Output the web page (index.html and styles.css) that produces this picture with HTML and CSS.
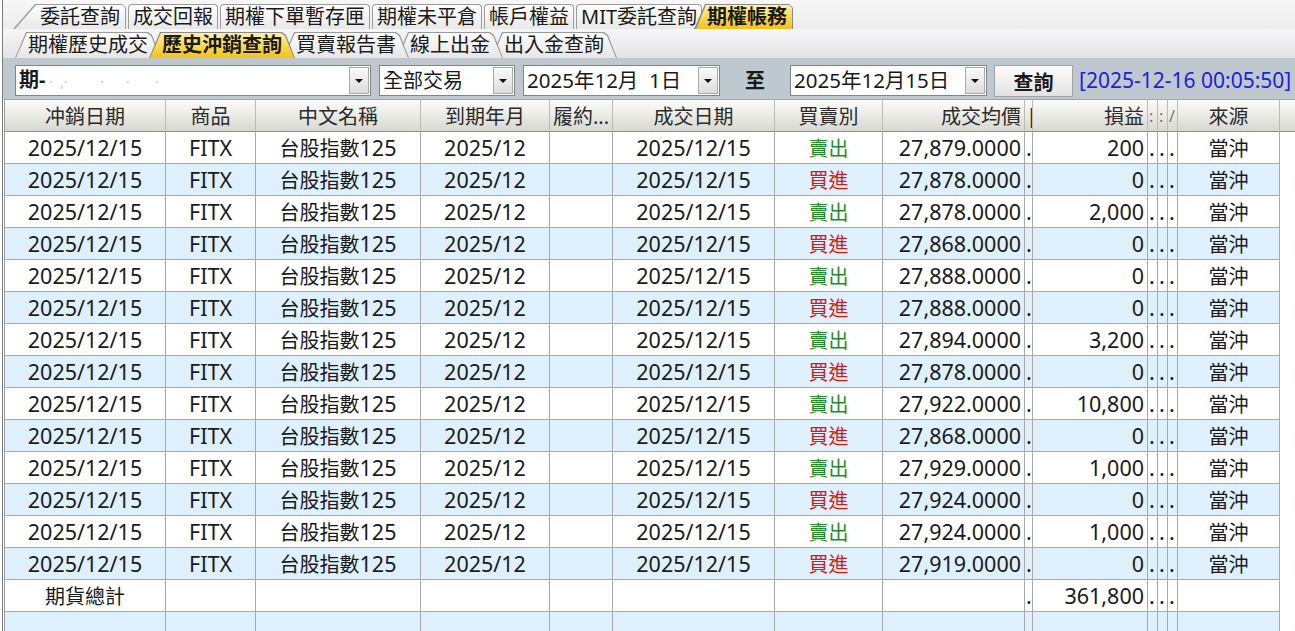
FILE: index.html
```html
<!DOCTYPE html>
<html lang="zh-Hant">
<head>
    <meta charset="UTF-8">
    <title>期權帳務 - 歷史沖銷查詢</title>
    <link rel="stylesheet" href="styles.css">
</head>
<body>
<div class="app">
    <!-- main tabs -->
    <div class="tabs-main">
        <div class="tab tab-slant tab-first">委託查詢</div>
        <div class="tab">成交回報</div>
        <div class="tab">期權下單暫存匣</div>
        <div class="tab">期權未平倉</div>
        <div class="tab">帳戶權益</div>
        <div class="tab tab-mit">MIT委託查詢</div>
        <div class="tab tab-slant tab-active">期權帳務</div>
    </div>

    <!-- sub tabs -->
    <div class="tabs-sub">
        <div class="trap z5">期權歷史成交</div>
        <div class="trap trap-active">歷史沖銷查詢</div>
        <div class="trap z4">買賣報告書</div>
        <div class="trap z3">線上出金</div>
        <div class="trap z2">出入金查詢</div>
    </div>

    <!-- query bar -->
    <div class="toolbar">
        <div class="combo combo-account">
            <span class="combo-text"><b>期-</b><span class="masked"> ·  ,·         ·      ·       ·</span></span>
            <span class="combo-btn"></span>
        </div>
        <div class="combo combo-type">
            <span class="combo-text">全部交易</span>
            <span class="combo-btn"></span>
        </div>
        <div class="combo combo-date">
            <span class="combo-text">2025年12月  1日</span>
            <span class="combo-btn"></span>
        </div>
        <div class="to-label">至</div>
        <div class="combo combo-date">
            <span class="combo-text">2025年12月15日</span>
            <span class="combo-btn"></span>
        </div>
        <button class="btn-query">查詢</button>
        <div class="stamp">[2025-12-16 00:05:50]</div>
    </div>

    <!-- result grid -->
    <div class="grid">
        <table>
            <colgroup>
                <col class="w-date">
                <col class="w-prod">
                <col class="w-name">
                <col class="w-month">
                <col class="w-strike">
                <col class="w-date2">
                <col class="w-side">
                <col class="w-price">
                <col class="w-thin8">
                <col class="w-pl">
                <col class="w-thin">
                <col class="w-thin">
                <col class="w-thin">
                <col class="w-src">
                <col>
            </colgroup>
            <thead>
                <tr>
                    <th>冲銷日期</th>
                    <th>商品</th>
                    <th>中文名稱</th>
                    <th>到期年月</th>
                    <th class="left">履約...</th>
                    <th>成交日期</th>
                    <th>買賣別</th>
                    <th class="right">成交均價</th>
                    <th class="thin">|</th>
                    <th class="right">損益</th>
                    <th class="thin dim">:</th>
                    <th class="thin dim">:</th>
                    <th class="thin dim">/</th>
                    <th>來源</th>
                    <th class="fill"></th>
                </tr>
            </thead>
            <tbody id="rows"></tbody>
        </table>
    </div>
</div>

<script>
    const trades = [
        ['賣出', '27,879.0000', '200'],
        ['買進', '27,878.0000', '0'],
        ['賣出', '27,878.0000', '2,000'],
        ['買進', '27,868.0000', '0'],
        ['賣出', '27,888.0000', '0'],
        ['買進', '27,888.0000', '0'],
        ['賣出', '27,894.0000', '3,200'],
        ['買進', '27,878.0000', '0'],
        ['賣出', '27,922.0000', '10,800'],
        ['買進', '27,868.0000', '0'],
        ['賣出', '27,929.0000', '1,000'],
        ['買進', '27,924.0000', '0'],
        ['賣出', '27,924.0000', '1,000'],
        ['買進', '27,919.0000', '0']
    ];

    const body = document.getElementById('rows');
    let html = '';

    trades.forEach(([side, price, pl], i) => {
        const cls = side === '賣出' ? 'sell' : 'buy';
        html += `<tr class="${i % 2 ? 'alt' : ''}">
            <td>2025/12/15</td>
            <td>FITX</td>
            <td><span class="zh">台股指數</span>125</td>
            <td>2025/12</td>
            <td></td>
            <td>2025/12/15</td>
            <td class="zh ${cls}">${side}</td>
            <td class="right">${price}</td>
            <td class="thin">.</td>
            <td class="right">${pl}</td>
            <td class="thin">.</td>
            <td class="thin">.</td>
            <td class="thin">.</td>
            <td class="zh">當沖</td>
            <td class="fill"></td>
        </tr>`;
    });

    // totals
    html += `<tr>
        <td class="zh">期貨總計</td><td></td><td></td><td></td><td></td><td></td><td></td><td></td>
        <td class="thin">.</td>
        <td class="right">361,800</td>
        <td class="thin">.</td><td class="thin">.</td><td class="thin">.</td>
        <td></td><td class="fill"></td>
    </tr>`;
    html += `<tr class="alt partial">
        <td class="zh">總計</td><td></td><td></td><td></td><td></td><td></td><td></td><td></td>
        <td class="thin"></td><td></td><td class="thin"></td><td class="thin"></td><td class="thin"></td>
        <td></td><td class="fill"></td>
    </tr>`;

    body.innerHTML = html;
</script>
</body>
</html>
```

FILE: styles.css
```css
/* --- Base --- */
* {
    box-sizing: border-box;
    margin: 0;
    padding: 0;
}

body {
    font-family: "Noto Sans", "Noto Sans CJK TC", sans-serif;
    color: #1a1a1a;
    background: #ffffff;
    width: 1295px;
    height: 631px;
    overflow: hidden;
}

.app {
    margin-left: 2px;
    border-left: 1px solid #7b7b7b;
    height: 631px;
    overflow: hidden;
}

/* --- Main tabs --- */
.tabs-main {
    height: 29px;
    display: flex;
    align-items: flex-end;
    padding-left: 10px;
    background: linear-gradient(#f7f7f7, #ededed);
}

.tab {
    position: relative;
    z-index: 0;
    height: 25px;
    line-height: 23px;
    font-size: 20px;
    padding: 0 4px;
    margin-right: 2px;
    border: 1px solid #9c9c9c;
    border-bottom: none;
    border-radius: 4px 4px 0 0;
    background: linear-gradient(#fefefe, #e8e8e8);
    white-space: nowrap;
}

.tab-slant {
    border: none;
    background: none;
}

.tab-slant::before,
.tab-slant::after {
    content: "";
    position: absolute;
    z-index: -1;
}

.tab-slant::before {
    inset: 0;
    background: #9c9c9c;
    clip-path: polygon(0 100%, 22px 0, calc(100% - 4px) 0, 100% 4px, 100% 100%);
}

.tab-slant::after {
    inset: 1px 1px 0 2px;
    background: linear-gradient(#fefefe, #e8e8e8);
    clip-path: polygon(0 100%, 21px 0, calc(100% - 3px) 0, 100% 3px, 100% 100%);
}

.tab-first {
    padding: 1px 6px 0 27px;
}

.tab-mit {
    margin-right: 0;
}

.tab-active {
    z-index: 5;
    margin-left: -8px;
    padding: 1px 6px 0 13px;
    font-weight: 700;
}

.tab-active::before {
    background: #8a8a8a;
    clip-path: polygon(0 100%, 11px 0, calc(100% - 4px) 0, 100% 4px, 100% 100%);
}

.tab-active::after {
    background: linear-gradient(#fff1a6, #fbd84a 55%, #f3c11a);
    clip-path: polygon(0 100%, 10px 0, calc(100% - 3px) 0, 100% 3px, 100% 100%);
}

/* --- Sub tabs --- */
.tabs-sub {
    height: 29px;
    display: flex;
    align-items: flex-end;
    padding-left: 12px;
    background: linear-gradient(#f6f6f8, #e3e3e7);
}

.trap {
    position: relative;
    z-index: 1;
    height: 26px;
    line-height: 25px;
    font-size: 20px;
    padding: 0 13px;
    margin-left: -12px;
    white-space: nowrap;
    isolation: isolate;
}

.trap:first-child {
    margin-left: 0;
}

.trap::before,
.trap::after {
    content: "";
    position: absolute;
    z-index: -1;
}

.trap::before {
    inset: 0;
    background: #9a9a9a;
    clip-path: polygon(0 100%, 11px 0, calc(100% - 13px) 0, calc(100% - 9px) 3px, 100% 100%);
}

.trap::after {
    inset: 1px 1px 0 1px;
    background: linear-gradient(#fcfcfc, #e6e6e6);
    clip-path: polygon(0 100%, 11px 0, calc(100% - 13px) 0, calc(100% - 9px) 3px, 100% 100%);
}

.trap-active {
    z-index: 10;
    font-weight: 700;
}

.trap-active::before {
    background: #8a8a8a;
}

.trap-active::after {
    background: linear-gradient(#fff1a6, #fbd84a 55%, #f3c11a);
}

.z5 { z-index: 5; }
.z4 { z-index: 4; }
.z3 { z-index: 3; }
.z2 { z-index: 2; }

/* --- Toolbar --- */
.toolbar {
    height: 41px;
    display: flex;
    align-items: flex-start;
    padding: 7px 0 0 12px;
    background: #bfc7cf;
}

.combo {
    height: 31px;
    display: flex;
    align-items: center;
    border: 1px solid #7e858d;
    background: #ffffff;
    font-size: 20px;
    margin-right: 8px;
}

.combo-account { width: 356px; }
.combo-type { width: 136px; }
.combo-date { width: 197px; margin-right: 0; font-size: 20.5px; }

.combo-text {
    flex: 1;
    padding-left: 3px;
    white-space: pre;
    overflow: hidden;
    line-height: 29px;
}

.masked {
    color: #c8c8c8;
    font-size: 14px;
}

.combo-btn {
    width: 20px;
    height: 27px;
    margin-right: 1px;
    border: 1px solid #ababab;
    background: linear-gradient(#fafafa, #dddddd);
    display: flex;
    align-items: center;
    justify-content: center;
}

.combo-btn::after {
    content: "";
    border-left: 4px solid transparent;
    border-right: 4px solid transparent;
    border-top: 4px solid #111111;
}

.to-label {
    width: 70px;
    text-align: center;
    font-size: 20px;
    font-weight: 700;
    line-height: 31px;
}

.btn-query {
    width: 79px;
    height: 32px;
    margin-left: 7px;
    font-family: inherit;
    font-size: 20px;
    font-weight: 700;
    color: #1a1a1a;
    border: 1px solid #a3a3a3;
    background: linear-gradient(#fcfcfc, #e2e2e2);
}

.stamp {
    margin-left: 6px;
    font-size: 21px;
    line-height: 31px;
    color: #1a22d8;
    white-space: nowrap;
}

/* --- Grid --- */
.grid {
    background: #ffffff;
}

table {
    width: 1292px;
    table-layout: fixed;
    border-collapse: separate;
    border-spacing: 0;
    margin-left: 1px;
    border-left: 1px solid #9a9a9a;
}

.w-date { width: 161px; }
.w-prod { width: 90px; }
.w-name { width: 165px; }
.w-month { width: 129px; }
.w-strike { width: 63px; }
.w-date2 { width: 162px; }
.w-side { width: 108px; }
.w-price { width: 142px; }
.w-thin8 { width: 8px; }
.w-pl { width: 115px; }
.w-thin { width: 10px; }
.w-src { width: 102px; }

th {
    height: 33px;
    font-size: 20px;
    font-weight: 400;
    color: #2b2b2b;
    padding: 0 3px;
    white-space: nowrap;
    overflow: hidden;
    background: linear-gradient(#fbfbf9, #ecece8 45%, #d8d8d2);
    border-top: 1px solid #a2a2a2;
    border-right: 1px solid #bbbbb5;
    border-bottom: 1px solid #8e8e8e;
}

td {
    height: 32px;
    font-size: 21.5px;
    text-align: center;
    padding: 0 2px;
    white-space: nowrap;
    overflow: hidden;
    border-right: 1px solid #a9a9a9;
    border-bottom: 1px solid #a9a9a9;
}

td .zh,
td.zh {
    font-size: 20px;
}

tr.alt td {
    background: #ddf0fb;
}

tr.partial td {
    vertical-align: top;
    padding-top: 17px;
}

th.left { text-align: left; }
th.right, td.right { text-align: right; padding-right: 3px; }

th.thin,
td.thin {
    padding: 0 0 0 1px;
    text-align: left;
    text-overflow: clip;
}

th.dim {
    color: #777777;
    font-size: 16px;
}

th.fill {
    border-right: none;
}

td.fill,
tr.alt td.fill {
    background: #ffffff;
    border: none;
}

.sell { color: #1f8c24; }
.buy { color: #d11a1a; }
```
